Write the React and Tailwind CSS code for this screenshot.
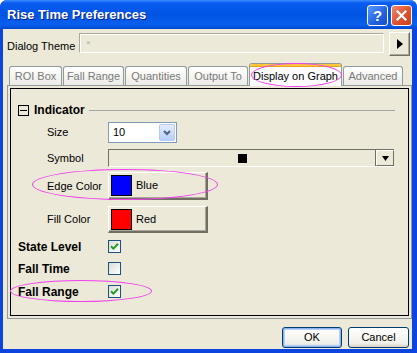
import React from 'react';

const font = { fontFamily: '"Liberation Sans", Arial, sans-serif' };

const Tab = ({ label, width, active }) =>
  active ? (
    <div
      className={`relative z-10 h-[23px] ${width} -mb-[1px] flex flex-col rounded-t-[3px] border border-b-0 border-[#919B9C] bg-[#FCFCFE] overflow-hidden`}
    >
      <div className="h-[3px] bg-[#FFC83C] border-b border-[#E6A222]" />
      <div className="flex-1 flex items-center justify-center text-[11px] text-black">{label}</div>
    </div>
  ) : (
    <div
      className={`h-[19px] ${width} flex items-center justify-center rounded-t-[3px] border border-b-0 border-[#919B9C] bg-[linear-gradient(to_bottom,#FFFFFF,#F3F3EF_60%,#ECEBE6)] text-[11px] text-[#7A7A7A]`}
    >
      {label}
    </div>
  );

const Check = ({ checked }) => (
  <div className="w-[13px] h-[13px] border border-[#1C5180] bg-[linear-gradient(135deg,#DCDCD7,#FFFFFF)] flex items-center justify-center">
    {checked && (
      <svg width="9" height="9" viewBox="0 0 9 9">
        <path d="M1 4.2 L3.4 6.6 L8 1.8" fill="none" stroke="#21A121" strokeWidth="2" />
      </svg>
    )}
  </div>
);

const ColorButton = ({ color, label }) => (
  <div className="w-[100px] h-full flex items-center bg-[#ECE9D8] border-t border-l border-t-white border-l-white border-r-2 border-b-2 border-r-[#716F64] border-b-[#716F64] shadow-[inset_-1px_-1px_0_#ACA899]">
    <div className={`ml-[2px] w-[21px] h-[21px] border border-black ${color}`} />
    <span className="ml-[4px] text-[11px]">{label}</span>
  </div>
);

export default function App() {
  return (
    <div style={font} className="relative w-[417px] h-[353px] flex flex-col bg-[#0B44DE] rounded-t-[7px] overflow-hidden text-black">
      {/* title bar */}
      <div className="h-[29px] flex items-center bg-[linear-gradient(to_bottom,#3D8EFF_0%,#0A5CF0_10%,#0054E3_50%,#0A60EE_85%,#0047CF_100%)]">
        <span className="ml-[7px] text-[13px] font-bold text-white [text-shadow:1px_1px_0_#0A1E8A]">Rise Time Preferences</span>
        <div className="ml-auto mr-[5px] flex gap-[3px] mt-[1px]">
          <div className="w-[21px] h-[21px] rounded-[3px] border border-white bg-[linear-gradient(135deg,#5A9BFF,#2360E0_60%,#1A4FCC)] flex items-center justify-center text-white font-bold text-[15px] leading-none">?</div>
          <div className="w-[21px] h-[21px] rounded-[3px] border border-white bg-[linear-gradient(135deg,#F08A6A,#E0502F_55%,#C7401F)] flex items-center justify-center">
            <svg width="11" height="11" viewBox="0 0 11 11">
              <path d="M1.5 1.5 L9.5 9.5 M9.5 1.5 L1.5 9.5" stroke="white" strokeWidth="2.2" strokeLinecap="square" />
            </svg>
          </div>
        </div>
      </div>

      {/* body */}
      <div className="flex-1 ml-[3px] mr-[5px] mb-[4px] bg-[#ECE9D8] flex flex-col pl-[4px]">
        <div className="mt-[3px] flex items-start">
          <span className="w-[72px] mt-[6px] text-[11px]">Dialog Theme</span>
          <div className="mt-[1px] w-[305px] h-[20px] border-t border-l border-[#ACA899] border-r border-b border-r-white border-b-white shadow-[inset_1px_1px_0_#FFFFFF] flex items-center pl-[6px]">
            <span className="text-[8px] text-[#A8A8A8] leading-none">×</span>
          </div>
          <div className="ml-[5px] w-[21px] h-[24px] flex items-center justify-center bg-[#ECE9D8] border-t border-l border-white border-r border-b border-r-[#716F64] border-b-[#716F64] shadow-[inset_-1px_-1px_0_#ACA899]">
            <svg width="6" height="10" viewBox="0 0 6 10">
              <path d="M0 0 L6 5 L0 10 Z" fill="black" />
            </svg>
          </div>
        </div>

        {/* tabs */}
        <div className="mt-[7px] h-[22px] flex items-end gap-[1px] pl-[2px]">
          <Tab label="ROI Box" width="w-[53px]" />
          <Tab label="Fall Range" width="w-[61px]" />
          <Tab label="Quantities" width="w-[62px]" />
          <Tab label="Output To" width="w-[60px]" />
          <Tab label="Display on Graph" width="w-[93px]" active />
          <Tab label="Advanced" width="w-[60px]" />
        </div>

        {/* panel */}
        <div className="w-[405px] h-[234px] border border-[#919B9C] p-[2px]">
          <div className="h-full border border-black flex flex-col pl-[7px]">
            <div className="mt-[15px] h-[12px] flex items-center">
              <div className="w-[11px] h-[11px] border border-black flex items-center justify-center">
                <div className="w-[7px] h-[1px] bg-black" />
              </div>
              <span className="ml-[5px] text-[12px] font-bold leading-none">Indicator</span>
              <div className="flex-1 ml-[4px] mr-[13px] h-[1px] bg-[#A5A5A5]" />
            </div>

            <div className="mt-[6px] h-[21px] flex items-center pl-[29px]">
              <span className="w-[61px] text-[11px]">Size</span>
              <div className="w-[69px] h-full border border-[#7F9DB9] bg-white flex items-center p-[1px]">
                <span className="flex-1 pl-[3px] text-[11px]">10</span>
                <div className="w-[16px] h-full rounded-[2px] bg-[linear-gradient(to_bottom,#E3EDFD,#B7CEF8)] border border-[#B6CBF5] flex items-center justify-center">
                  <svg width="8" height="6" viewBox="0 0 8 6">
                    <path d="M1 1 L4 4 L7 1" fill="none" stroke="#4D6185" strokeWidth="2" />
                  </svg>
                </div>
              </div>
            </div>

            <div className="mt-[6px] h-[18px] flex items-center pl-[29px]">
              <span className="w-[61px] text-[11px]">Symbol</span>
              <div className="w-[286px] h-full flex border-t border-l border-[#716F64] border-b border-b-white">
                <div className="flex-1 flex items-center justify-center border-r border-[#716F64]">
                  <div className="w-[9px] h-[9px] bg-black" />
                </div>
                <div className="w-[18px] flex items-center justify-center border-t border-l border-white border-r border-b border-r-[#716F64] border-b-[#716F64]">
                  <svg width="7" height="5" viewBox="0 0 7 5">
                    <path d="M0 0 L7 0 L3.5 5 Z" fill="black" />
                  </svg>
                </div>
              </div>
            </div>

            <div className="mt-[5px] h-[28px] flex items-center pl-[29px]">
              <span className="w-[61px] text-[11px]">Edge Color</span>
              <ColorButton color="bg-[#0000FF]" label="Blue" />
            </div>

            <div className="mt-[6px] h-[27px] flex items-center pl-[29px]">
              <span className="w-[61px] text-[11px]">Fill Color</span>
              <ColorButton color="bg-[#FF0000]" label="Red" />
            </div>

            <div className="mt-[7px] h-[13px] flex items-center">
              <span className="w-[90px] text-[12px] font-bold">State Level</span>
              <Check checked />
            </div>
            <div className="mt-[9px] h-[13px] flex items-center">
              <span className="w-[90px] text-[12px] font-bold">Fall Time</span>
              <Check />
            </div>
            <div className="mt-[10px] h-[13px] flex items-center">
              <span className="w-[90px] text-[12px] font-bold">Fall Range</span>
              <Check checked />
            </div>
          </div>
        </div>

        {/* buttons */}
        <div className="mt-[8px] flex justify-end gap-[6px] pr-[3px]">
          <div className="w-[60px] h-[21px] rounded-[3px] border border-[#003C74] bg-[linear-gradient(to_bottom,#FFFFFF,#F0F0EA_80%,#D6D0C5)] shadow-[inset_0_0_0_1px_#8DB2F0,inset_0_0_0_2px_#B9D1FA] flex items-center justify-center text-[11px]">OK</div>
          <div className="w-[61px] h-[21px] rounded-[3px] border border-[#003C74] bg-[linear-gradient(to_bottom,#FFFFFF,#F0F0EA_80%,#D6D0C5)] flex items-center justify-center text-[11px]">Cancel</div>
        </div>
      </div>

      {/* highlight ellipses */}
      <div className="absolute z-20 left-[251px] top-[63px] w-[91px] h-[24px] rounded-[50%] border-[1.5px] border-[#F040F0] pointer-events-none" />
      <div className="absolute z-20 left-[32px] top-[169px] w-[186px] h-[31px] rounded-[50%] border-[1.5px] border-[#F040F0] pointer-events-none" />
      <div className="absolute z-20 left-[10px] top-[280px] w-[142px] h-[22px] rounded-[50%] border-[1.5px] border-[#F040F0] pointer-events-none" />
    </div>
  );
}
